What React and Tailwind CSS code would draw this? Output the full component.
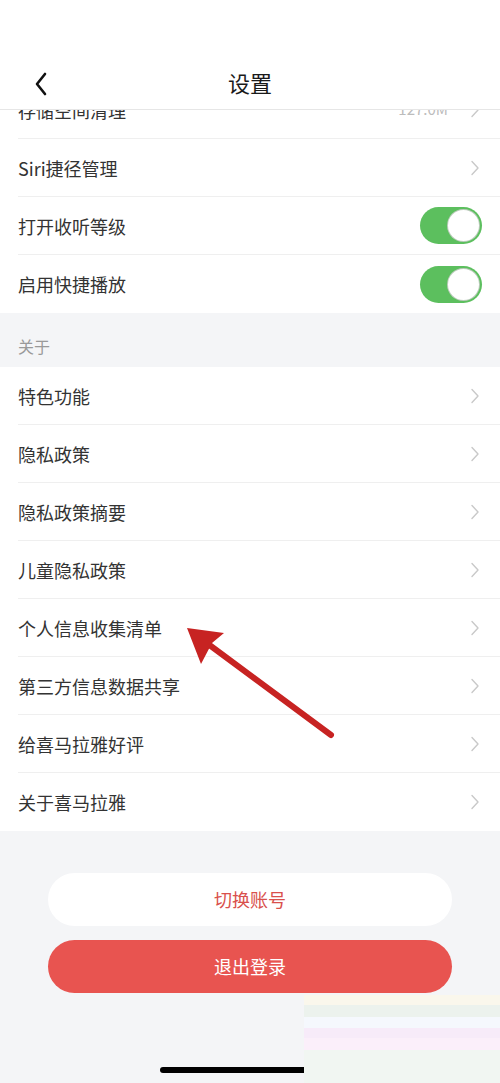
import React from "react";

const Chevron = () => (
  <svg width="10" height="16" viewBox="0 0 10 16" className="shrink-0">
    <path d="M2 1.5 L8 8 L2 14.5" fill="none" stroke="#c9c9c9" strokeWidth="1.4" strokeLinecap="round" strokeLinejoin="round" />
  </svg>
);

const Toggle = () => (
  <div className="w-[62px] h-[37px] rounded-full bg-[#5cbf5e] relative shrink-0">
    <div className="absolute right-[2px] top-[2px] w-[33px] h-[33px] rounded-full bg-white border border-[#8fa98f]/60" />
  </div>
);

const Row = ({ label, right, last, value, className = "" }) => (
  <div className={`h-[58px] pl-[18px] bg-white ${className}`}>
    <div className={`h-full flex items-center pr-[18px] ${last ? "" : "border-b border-[#efefef]"}`}>
      <span className="flex-1 text-[18px] text-[#333333] leading-none">{label}</span>
      {value && <span className="text-[15px] text-[#bcbcbc] mr-[22px]">{value}</span>}
      {right === "toggle" ? <Toggle /> : <div className="mr-[2px]"><Chevron /></div>}
    </div>
  </div>
);

const about = [
  "特色功能",
  "隐私政策",
  "隐私政策摘要",
  "儿童隐私政策",
  "个人信息收集清单",
  "第三方信息数据共享",
  "给喜马拉雅好评",
  "关于喜马拉雅",
];

export default function App() {
  return (
    <div
      className="relative w-[500px] h-[1083px] overflow-hidden bg-[#f4f5f7]"
      style={{ fontFamily: '"Noto Sans CJK SC", "Noto Sans", sans-serif' }}
    >
      {/* header */}
      <div className="relative z-10 h-[110px] bg-white border-b border-[#e6e6e6] pt-[55px]">
        <div className="h-[54px] flex items-center justify-center relative">
          <svg width="14" height="24" viewBox="0 0 14 24" className="absolute left-[34px] top-[17px]">
            <path d="M11 2 L3 12 L11 22" fill="none" stroke="#111" strokeWidth="2.6" strokeLinecap="round" strokeLinejoin="round" />
          </svg>
          <span className="text-[22px] text-[#1a1a1a]">设置</span>
        </div>
      </div>

      <div className="mt-[-29px]">
        <Row label="存储空间清理" value="127.0M" />
        <Row label="Siri捷径管理" />
        <Row label="打开收听等级" right="toggle" />
        <Row label="启用快捷播放" right="toggle" last />
      </div>

      <div className="h-[54px] flex items-end pl-[18px] pb-[11px]">
        <span className="text-[16px] leading-[20px] text-[#9a9a9a]">关于</span>
      </div>

      <div>
        {about.map((t, i) => (
          <Row key={t} label={t} last={i === about.length - 1} />
        ))}
      </div>

      <div className="px-[48px] pt-[42px] flex flex-col gap-[14px]">
        <button className="h-[53px] w-full rounded-full bg-white text-[18px] text-[#d9504c]">切换账号</button>
        <button className="h-[53px] w-full rounded-full bg-[#e85450] text-[18px] text-white">退出登录</button>
      </div>

      {/* home indicator */}
      <div className="absolute left-[160px] top-[1067px] w-[182px] h-[6px] rounded-full bg-black" />

      {/* screenshot artifact stripes */}
      <div className="absolute left-[304px] top-[995px] w-[196px] h-[88px] flex flex-col">
        <div className="h-[10px] bg-[#faf7ec]" />
        <div className="h-[12px] bg-[#ecf2ed]" />
        <div className="h-[11px] bg-[#f5f8fd]" />
        <div className="h-[10px] bg-[#f7ebf9]" />
        <div className="h-[12px] bg-[#fbeffa]" />
        <div className="flex-1 bg-[#f1f6f2]" />
      </div>

      {/* red annotation arrow */}
      <svg className="absolute left-0 top-0 pointer-events-none" width="500" height="1083" viewBox="0 0 500 1083">
        <line x1="331" y1="735" x2="200" y2="638" stroke="#c72322" strokeWidth="6" strokeLinecap="round" />
        <polygon points="187,628 224,633 212,643 201,664" fill="#c72322" />
      </svg>
    </div>
  );
}
